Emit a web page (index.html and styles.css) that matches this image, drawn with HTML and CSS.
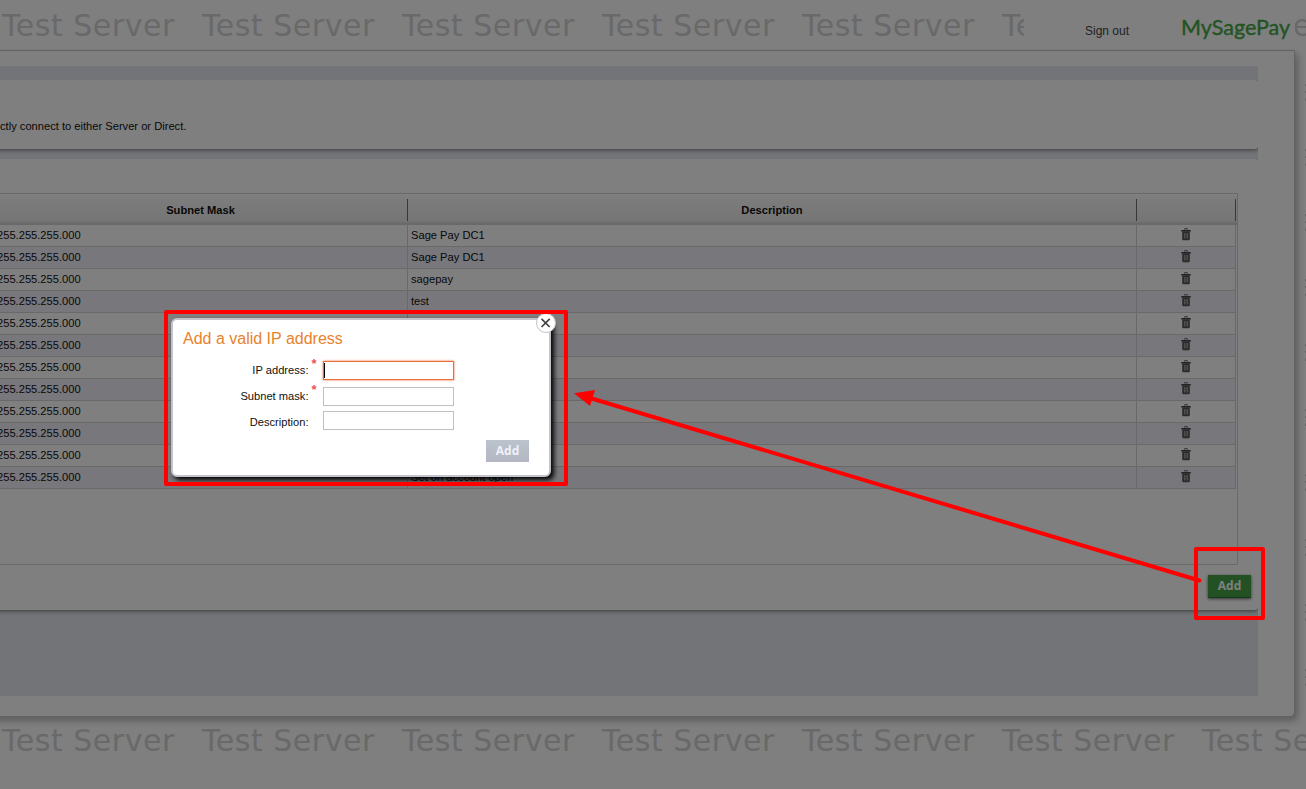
FILE: index.html
```html
<!DOCTYPE html>
<html lang="en">
<head>
<meta charset="utf-8">
<title>MySagePay</title>
<link rel="stylesheet" href="styles.css">
</head>
<body>
<svg class="defs" width="0" height="0"><symbol id="trash" viewBox="0 0 10 13"><path d="M3.5 1.5V.7h3v.8" fill="none" stroke="#666" stroke-width="1"/><path d="M.3 2h9.4v1.600H.3z" fill="#444"/><path d="M1.200 3.600h7.600v7.400q0 1.200-1.200 1.200H2.400q-1.200 0-1.200-1.200z" fill="#555"/><path d="M3.400 5v5.500M5 5v5.500M6.600 5v5.500" stroke="#bbb" stroke-width=".8"/></symbol></svg>
<div class="page">
  <header class="topbar">
    <div class="marks"><span>Test Server</span><span>Test Server</span><span>Test Server</span><span>Test Server</span><span>Test Server</span><span>Test Server</span><span>Test Server</span></div>
    <div class="account"><a class="signout">Sign out</a><span class="logo">MySagePay</span></div>
  </header>
  <div class="middle">
    <div class="sidemarks"><span>e</span><span>e</span><span>e</span><span>e</span><span>e</span><span>e</span><span>e</span><span>e</span><span>e</span><span>e</span></div>
    <div class="shade">
      <main class="panel">
        <div class="content">
          <section class="card intro">ctly connect to either Server or Direct.</section>
          <section class="card list">
            <div class="tablebox">
              <div class="row head"><div class="mask">Subnet Mask</div><div class="desc">Description</div><div class="act"></div></div>
              <div class="row"><div class="mask">255.255.255.000</div><div class="desc">Sage Pay DC1</div><div class="act"><svg><use href="#trash"/></svg></div></div>
              <div class="row alt"><div class="mask">255.255.255.000</div><div class="desc">Sage Pay DC1</div><div class="act"><svg><use href="#trash"/></svg></div></div>
              <div class="row"><div class="mask">255.255.255.000</div><div class="desc">sagepay</div><div class="act"><svg><use href="#trash"/></svg></div></div>
              <div class="row alt"><div class="mask">255.255.255.000</div><div class="desc">test</div><div class="act"><svg><use href="#trash"/></svg></div></div>
              <div class="row"><div class="mask">255.255.255.000</div><div class="desc"></div><div class="act"><svg><use href="#trash"/></svg></div></div>
              <div class="row alt"><div class="mask">255.255.255.000</div><div class="desc"></div><div class="act"><svg><use href="#trash"/></svg></div></div>
              <div class="row"><div class="mask">255.255.255.000</div><div class="desc"></div><div class="act"><svg><use href="#trash"/></svg></div></div>
              <div class="row alt"><div class="mask">255.255.255.000</div><div class="desc"></div><div class="act"><svg><use href="#trash"/></svg></div></div>
              <div class="row"><div class="mask">255.255.255.000</div><div class="desc"></div><div class="act"><svg><use href="#trash"/></svg></div></div>
              <div class="row alt"><div class="mask">255.255.255.000</div><div class="desc"></div><div class="act"><svg><use href="#trash"/></svg></div></div>
              <div class="row"><div class="mask">255.255.255.000</div><div class="desc"></div><div class="act"><svg><use href="#trash"/></svg></div></div>
              <div class="row alt"><div class="mask">255.255.255.000</div><div class="desc">Set on account open</div><div class="act"><svg><use href="#trash"/></svg></div></div>
            </div>
            <button class="btn">Add</button>
          </section>
        </div>
      </main>
    </div>
  </div>
  <div class="marks bottom"><span>Test Server</span><span>Test Server</span><span>Test Server</span><span>Test Server</span><span>Test Server</span><span>Test Server</span><span>Test Server</span></div>
</div>
<div class="overlay"></div>
<div class="modal">
  <h2>Add a valid IP address</h2>
  <form>
    <label class="field"><span class="name">IP address:</span><i>*</i><span class="input focus"><b class="caret"></b></span></label>
    <label class="field"><span class="name">Subnet mask:</span><i>*</i><span class="input"></span></label>
    <label class="field last"><span class="name">Description:</span><i></i><span class="input"></span></label>
    <div class="actions"><span class="btn disabled">Add</span></div>
  </form>
  <svg class="close" width="22" height="22" viewBox="0 0 22 22"><circle cx="11" cy="11" r="9.500" fill="#fff" stroke="#c3c3cb" stroke-width="1"/><path d="M6.500 6.800l8.200 8.200M14.700 6.800l-8.200 8.200" stroke="#444" stroke-width="1.700"/></svg>
</div>
<svg class="notes" width="1306" height="789" viewBox="0 0 1306 789">
  <g fill="none" stroke="#f00" stroke-width="4" stroke-linejoin="round"><rect x="166" y="312" width="400" height="172"/><rect x="1196" y="549" width="67" height="69"/><path d="M1199.500 580.500L590 398" stroke-linecap="round"/></g>
  <path d="M574 393.200L595 390 590 406z" fill="#f00"/>
</svg>
</body>
</html>
```
FILE: styles.css
```css
* { box-sizing: border-box; }
body {
  margin: 0;
  width: 1306px;
  height: 789px;
  overflow: hidden;
  position: relative;
  background: #fff;
  font: 11.15px "Liberation Sans", Arial, sans-serif;
  color: #111;
}
.defs { position: absolute; }
.page { height: 789px; overflow: hidden; }
.topbar { position: relative; height: 50px; overflow: hidden; }
.marks {
  display: grid;
  grid-template-columns: repeat(7, 200px);
  padding-left: 2px;
  height: 50px;
  font: 30px/52px "DejaVu Sans", sans-serif;
  letter-spacing: .53px;
  color: #d2d2d2;
  white-space: nowrap;
}
.bottom { height: 72px; line-height: 48px; }
.account {
  position: absolute;
  left: 1024px;
  top: 0;
  width: 271px;
  height: 50px;
  background: #fff;
  display: flex;
  padding-left: 61px;
}
.signout { font-size: 12px; line-height: 62px; width: 96px; color: #444; }
.logo { font: 21.5px/54px Lato, sans-serif; color: #46a846; -webkit-text-stroke: .4px #46a846; }
.middle { position: relative; height: 667px; }
.sidemarks {
  position: absolute;
  left: 1296px;
  top: 16px;
  display: grid;
  grid-auto-rows: 65px;
  font: 30px/50px "DejaVu Sans", sans-serif;
  color: #d2d2d2;
}
.shade { position: relative; width: 1305px; height: 667px; background: #fff; }
.panel {
  width: 1315px;
  height: 667px;
  margin-left: -20px;
  background: #fff;
  border: 1px solid #c4c4c4;
  border-radius: 0 0 5px 0;
  padding: 15px 0 0 19px;
  box-shadow: 3px 4px 7px rgba(0,0,0,.27);
}
.content { width: 1258px; height: 630px; background: #e6e8ef; padding-top: 14px; }
.card { margin-left: -20px; padding-left: 20px; background: #fff; border-radius: 0 3px 3px 0; box-shadow: 0 1px 4px rgba(0,0,0,.5); clip-path: inset(0 0 -8px 0); }
.intro { height: 69px; padding-top: 39px; line-height: 14px; }
.list { height: 451px; margin-top: 10px; padding-top: 34px; }
.tablebox { width: 1238px; height: 372px; border: 1px solid #d2d2d2; border-left: 0; overflow: hidden; }
.row { display: grid; grid-template-columns: 408px 729px 99px; width: 1236px; height: 22px; line-height: 21px; }
.row > div { border-right: 1px solid #d2d2d2; border-bottom: 1px solid #d2d2d2; white-space: nowrap; }
.alt { background: #f0eef8; }
.mask { text-indent: -3px; }
.desc { padding-left: 3px; }
.act { display: flex; justify-content: center; align-items: flex-start; padding-top: 3px; }
.act svg { width: 10px; height: 13px; }
.head {
  width: 1237px;
  height: 31px;
  padding: 5px 1px 5px 0;
  background: linear-gradient(#fff 0, #f5f5f5 30%, #efefef 65%, #e8e8e8 88%, #d2d2d2 96%, #d2d2d2 100%);
  font-weight: bold;
  text-align: center;
  line-height: 22px;
}
.head > div { border-bottom: 0; border-color: #707070; }
.head .desc { padding: 0; }
.head .mask { text-indent: -6px; }
.btn {
  display: block;
  width: 43px;
  height: 23px;
  padding: 0;
  border: 0;
  border-bottom: 1px solid #2c742c;
  background: #46a346;
  color: #fff;
  text-align: center;
  font: bold 12px/22px "Open Sans", sans-serif;
  box-shadow: 0 1px 3px rgba(0,0,0,.6);
}
.list .btn { margin: 10px 0 0 1208px; }
.overlay { position: absolute; inset: 0; background: rgba(0,0,0,.5); }
.modal {
  position: absolute;
  left: 171px;
  top: 318px;
  width: 380px;
  height: 159px;
  padding: 9px 10px;
  background: #fff;
  border: 2px solid #c3c3cb;
  border-radius: 6px;
  box-shadow: 3px 3px 5px 0 #000;
}
.modal h2 { margin: 0 0 12px; font-size: 16px; font-weight: normal; line-height: 20px; color: #e9822c; }
.field { display: flex; height: 26px; }
.name { width: 125.500px; text-align: right; line-height: 18px; }
.field i { width: 14.500px; padding-left: 3px; font: bold 13px/6px "Liberation Sans", sans-serif; color: #e8535a; }
.input { width: 131px; height: 19px; border: 1px solid #bfbfbf; }
.focus { border-color: #e8703a; box-shadow: 0 0 2px #f06030; }
.caret { display: block; width: 1px; height: 15px; margin: 1px 0; background: #000; }
.last .input { margin-top: -2px; }
.actions { display: flex; justify-content: flex-end; padding: 1px 10px 0 0; }
.disabled { height: 22px; border: 0; background: linear-gradient(#bcc3cb, #b3b7c3); color: #f0f0fa; box-shadow: none; }
.close { position: absolute; right: -8px; top: -8px; }
.notes { position: absolute; left: 0; top: 0; }
```
